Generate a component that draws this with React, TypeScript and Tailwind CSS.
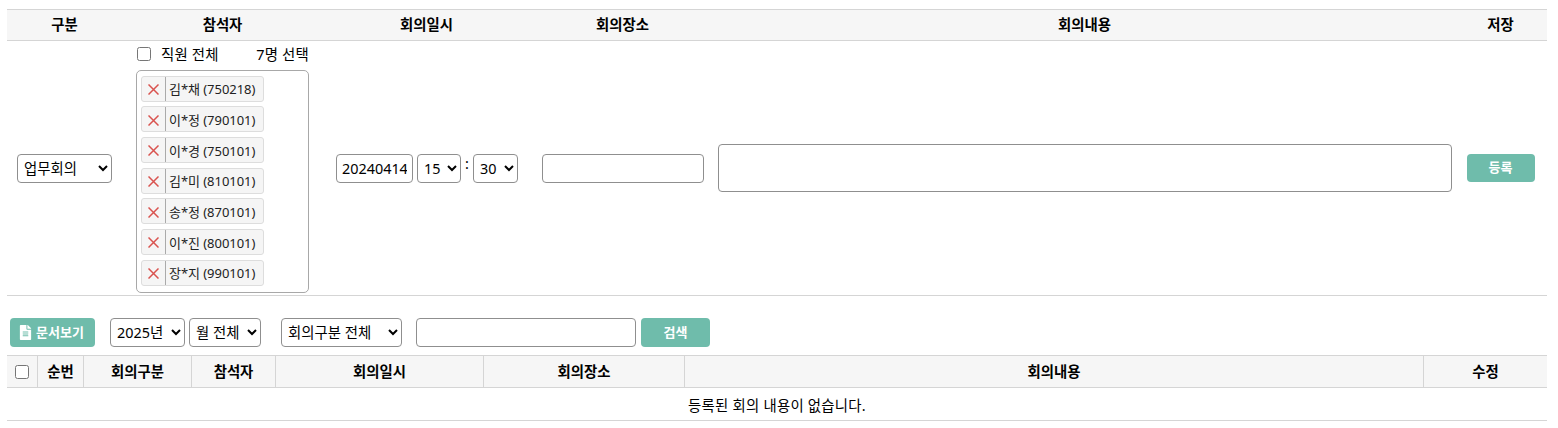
import { FaFileAlt } from "react-icons/fa";

const people = [
  "김*채 (750218)",
  "이*정 (790101)",
  "이*경 (750101)",
  "김*미 (810101)",
  "송*정 (870101)",
  "이*진 (800101)",
  "장*지 (990101)",
];

const topColumns = "grid grid-cols-[115px_201px_207px_185px_739px_93px]";
const listColumns = "grid grid-cols-[31px_46px_108px_84px_208px_201px_739px_123px]";
const control = "h-[29px] rounded-[4px] border border-[#8f8f8f] bg-white text-[14.4px] text-black";
const button = "flex items-center justify-center rounded-[4px] bg-[#6fbcab] text-[13px] font-bold text-white";

function Chip({ label }: { label: string }) {
  return (
    <div className="flex h-[26px] w-[123px] shrink-0 items-center rounded-[3px] border border-[#dddddd] bg-[#f5f5f5] text-[13px]">
      <span className="flex h-full w-[24px] items-center justify-center border-r border-[#aaaaaa] pt-[2px]">
        <svg width="11" height="11" viewBox="0 0 11 11" fill="none" stroke="#d9534f" strokeWidth="1.5">
          <path d="M0.5 0.5 10.5 10.5M10.5 0.5 0.5 10.5" />
        </svg>
      </span>
      <span className="pt-[3px] pl-[3px] tracking-[-0.05px] text-[#222222]">{label}</span>
    </div>
  );
}

export default function App() {
  return (
    <div className="h-[428px] w-[1558px] overflow-hidden bg-white pt-[9px] pr-[11px] pl-[7px] font-['Noto_Sans','Noto_Sans_CJK_KR',sans-serif] text-[14.4px] text-black">
      <div className={`${topColumns} h-[32px] items-center border-y border-[#d5d5d5] bg-[#f6f6f6] text-center font-bold`}>
        <div>구분</div>
        <div>참석자</div>
        <div>회의일시</div>
        <div>회의장소</div>
        <div>회의내용</div>
        <div>저장</div>
      </div>

      <div className={`${topColumns} h-[255px] items-center border-b border-[#d5d5d5]`}>
        <div className="flex justify-center">
          <select className={`${control} w-[95px] px-[2px]`} defaultValue="업무회의">
            <option>업무회의</option>
          </select>
        </div>

        <div className="-mt-[2px] pl-[14px]">
          <div className="flex h-[28px] w-[173px] items-center justify-between pb-[2px] tracking-[0.2px]">
            <label className="flex items-center gap-[10px] pl-[1px]">
              <input type="checkbox" className="h-[14px] w-[14px]" />
              <span>직원 전체</span>
            </label>
            <span>7명 선택</span>
          </div>
          <div className="flex h-[223px] w-[173px] flex-col gap-[4.7px] rounded-[5px] border border-[#a8a8a8] px-[4px] pt-[5px]">
            {people.map((p) => (
              <Chip key={p} label={p} />
            ))}
          </div>
        </div>

        <div className="flex items-center justify-center gap-[4px] pl-[1px]">
          <input className={`${control} w-[77px] px-[5px]`} defaultValue="20240414" />
          <select className={`${control} w-[44px] px-[2px]`} defaultValue="15">
            <option>15</option>
          </select>
          <span className="-mt-[8px] w-[4px] text-center">:</span>
          <select className={`${control} w-[45px] px-[2px]`} defaultValue="30">
            <option>30</option>
          </select>
        </div>

        <div className="flex justify-center">
          <input className={`${control} w-[162px] shrink-0`} />
        </div>

        <div className="flex justify-center">
          <textarea className="h-[48px] w-[734px] shrink-0 resize-none rounded-[4px] border border-[#8f8f8f]" />
        </div>

        <div className="flex justify-center">
          <button className={`${button} h-[28px] w-[68px]`}>등록</button>
        </div>
      </div>

      <div className="flex h-[59px] items-center pt-[14px]">
        <button className={`${button} ml-[3px] h-[29px] w-[85px] gap-[3px] pr-[3px]`}>
          <FaFileAlt className="text-[15px]" />
          문서보기
        </button>
        <select className={`${control} ml-[15px] w-[75px] px-[2px]`} defaultValue="2025년">
          <option>2025년</option>
        </select>
        <select className={`${control} ml-[4px] w-[72px] px-[2px]`} defaultValue="월 전체">
          <option>월 전체</option>
        </select>
        <select className={`${control} ml-[20px] w-[121px] px-[2px]`} defaultValue="회의구분 전체">
          <option>회의구분 전체</option>
        </select>
        <input className={`${control} ml-[14px] w-[220px]`} />
        <button className={`${button} ml-[5px] h-[29px] w-[69px]`}>검색</button>
      </div>

      <div className={`${listColumns} h-[33px] items-center border-y border-[#d5d5d5] bg-[#f6f6f6] text-center font-bold [&>div]:flex [&>div]:h-full [&>div]:items-center [&>div]:justify-center [&>div]:border-r [&>div]:border-[#d5d5d5] [&>div:last-child]:border-r-0`}>
        <div>
          <input type="checkbox" className="h-[14px] w-[14px]" />
        </div>
        <div>순번</div>
        <div>회의구분</div>
        <div>참석자</div>
        <div>회의일시</div>
        <div>회의장소</div>
        <div>회의내용</div>
        <div>수정</div>
      </div>
      <div className="flex h-[33px] items-center justify-center border-b border-[#d5d5d5] pt-[3px] tracking-[0.24px]">
        등록된 회의 내용이 없습니다.
      </div>
    </div>
  );
}
